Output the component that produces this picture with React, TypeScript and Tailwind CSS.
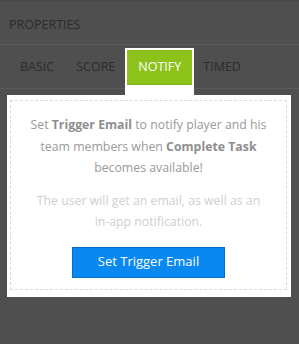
import React from "react";

export default function App() {
  const tabs = ["BASIC", "SCORE", "NOTIFY", "TIMED"];
  return (
    <div
      className="w-[299px] h-[344px] bg-[#4f4f4f] border-t border-[#484848] overflow-hidden"
      style={{ fontFamily: '"Open Sans", "Liberation Sans", sans-serif' }}
    >
      <div className="h-[44px] border-b border-[#5b5b5b] pl-[9px] pt-[15px] text-[12.5px] leading-[17px] text-[#2b2b2b]">
        PROPERTIES
      </div>
      <div className="h-[44px] border-b border-[#5b5b5b] pl-[9px] pt-[3px] flex items-start text-[12.5px] text-[#2b2b2b]">
        {tabs.map((t) =>
          t === "NOTIFY" ? (
            <div key={t} className="-ml-[1px] -mr-[2px] h-[47px] bg-white px-[2px] pt-[2px]">
              <div className="h-[35px] bg-[#8cc21a] border-b border-[#7fb012] px-[11px] flex items-center text-white">
                {t}
              </div>
            </div>
          ) : (
            <div key={t} className="mt-[2px] h-[35px] px-[11px] flex items-center">
              {t}
            </div>
          )
        )}
      </div>
      <div className="ml-[7px] mt-[6px] w-[284px] h-[202px] bg-white pt-[5px] pl-[3px] pr-[4px] pb-[7px]">
        <div className="h-full border border-dashed border-[#dadada] pt-[13px] flex flex-col items-center text-center text-[12.3px] leading-[21.5px]">
          <p className="w-[239px] text-[#9a9a9a]">
            Set <b className="font-bold text-[#8e8e8e]">Trigger Email</b> to notify player and his team members when{" "}
            <b className="font-bold text-[#8e8e8e]">Complete Task</b> becomes available!
          </p>
          <p className="w-[239px] mt-[11px] text-[#cfcfcf]">
            The user will get an email, as well as an in-app notification.
          </p>
          <button className="mt-[14px] w-[153px] h-[31px] bg-[#0888f0] border border-[#0a6ec2] text-white text-[13px]">
            Set Trigger Email
          </button>
        </div>
      </div>
    </div>
  );
}
